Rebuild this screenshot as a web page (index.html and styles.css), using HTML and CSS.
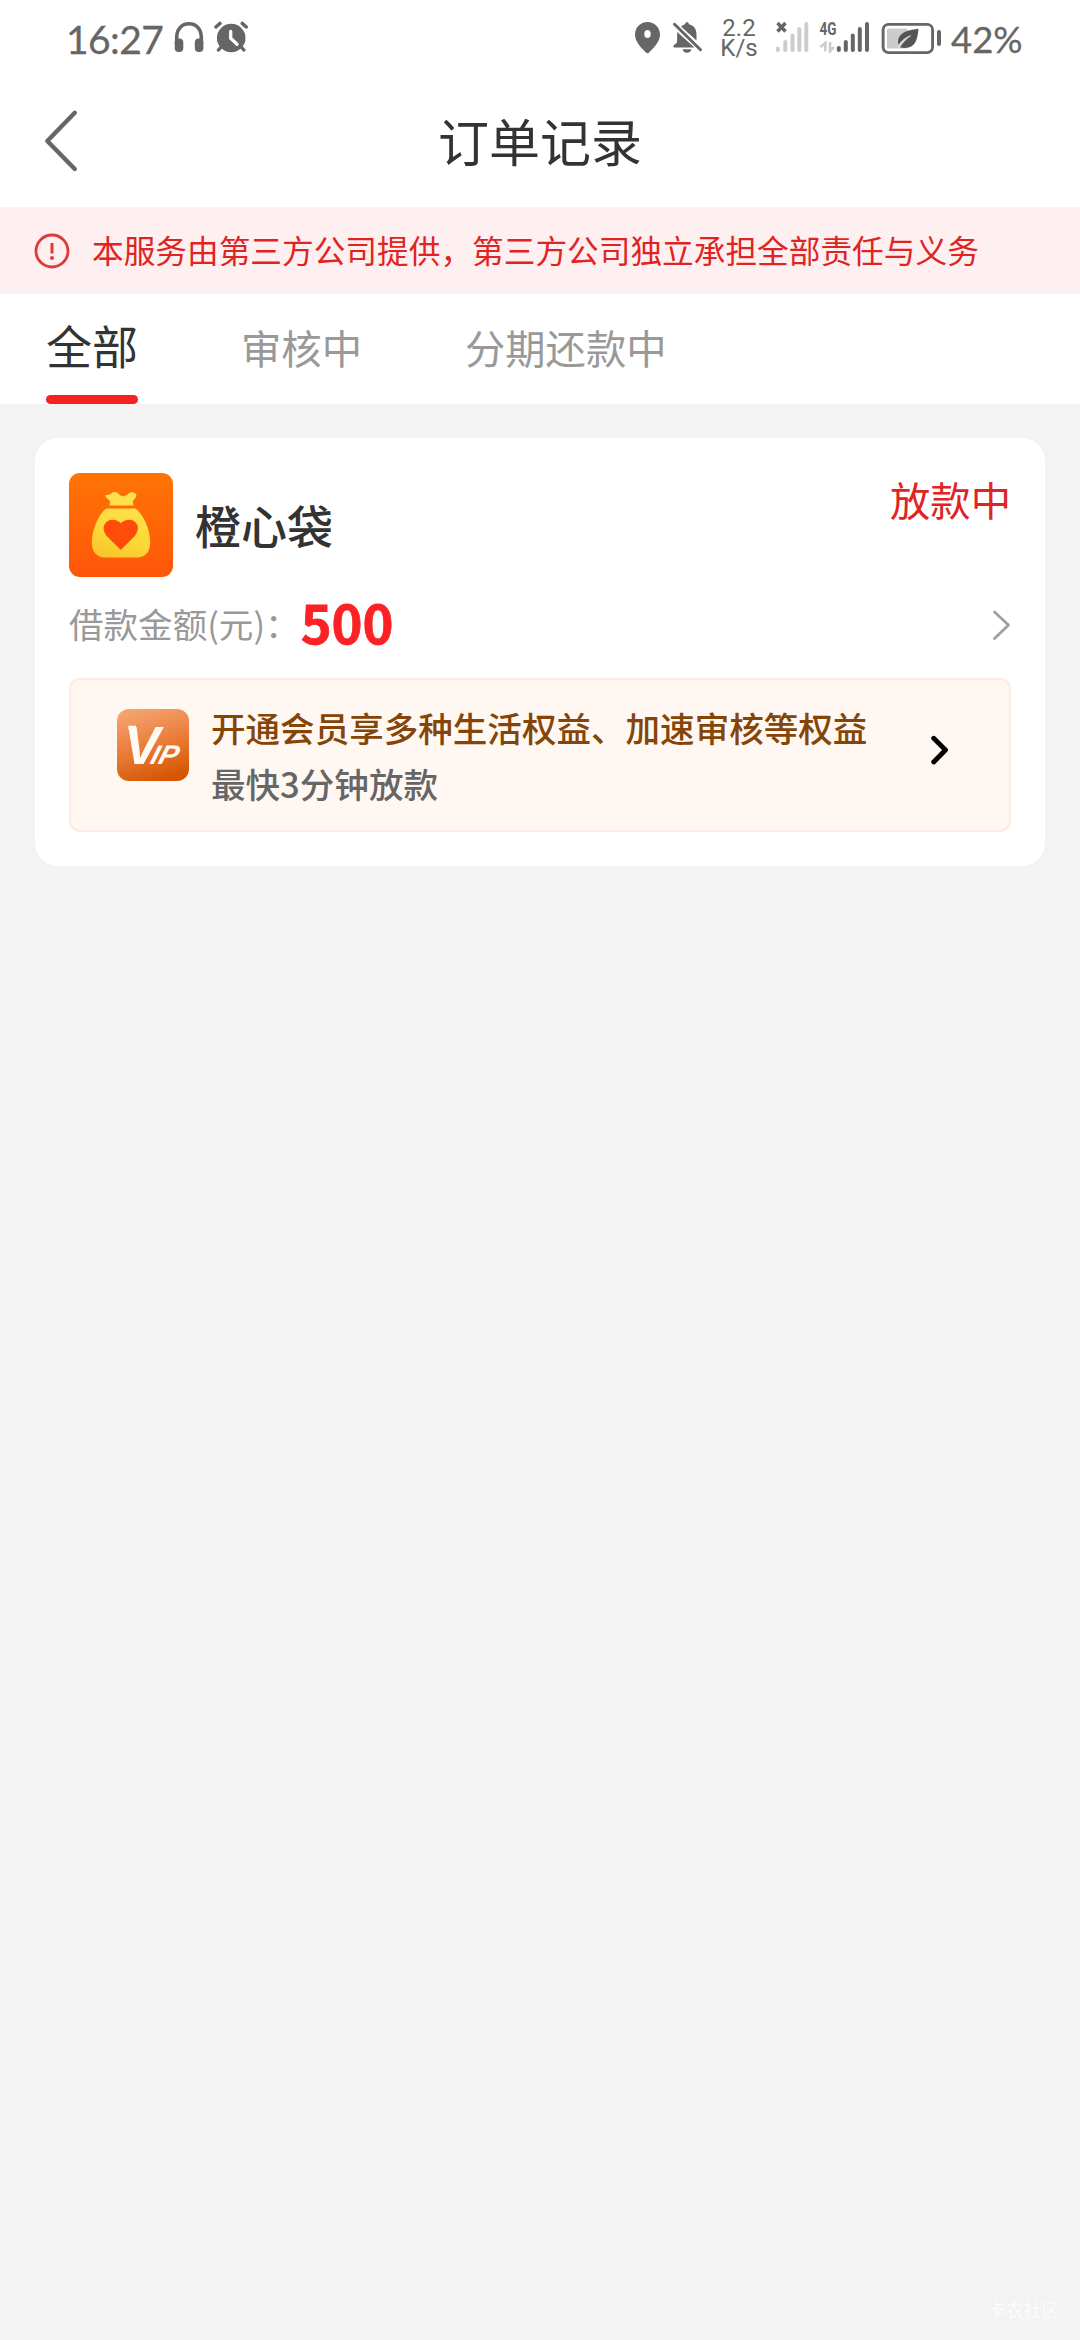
FILE: index.html
```html
<!DOCTYPE html>
<html lang="zh-CN">
<head>
<meta charset="utf-8">
<title>订单记录</title>
<link rel="stylesheet" href="styles.css">
</head>
<body>
<div class="status">
  <span class="time">16:27</span>
  <svg class="headphones" width="30" height="60" viewBox="174 10 30 60">
    <path d="M176.700 44V37.500C176.700 29.500 181.500 23.800 189 23.800S201.300 29.500 201.300 37.500V44" fill="none" stroke="#666" stroke-width="3.600"/>
    <rect x="174.700" y="38.500" width="8.600" height="13.500" rx="4" fill="#666"/>
    <rect x="194.800" y="38.500" width="8.600" height="13.500" rx="4" fill="#666"/>
  </svg>
  <svg class="alarm" width="35" height="60" viewBox="214 10 35 60">
    <circle cx="231.200" cy="38" r="14.300" fill="#666"/>
    <path d="M215.900 27L220 23.400M246.300 27L242.200 23.400M222 46L218.500 50M240.300 46L243.800 50" stroke="#666" stroke-width="3.400" stroke-linecap="round"/>
    <path d="M230.700 31.500V38.300L237 44.300" fill="none" stroke="#fff" stroke-width="3.300" stroke-linecap="round"/>
  </svg>
  <svg class="pin" width="26" height="60" viewBox="635 10 26 60">
    <path fill-rule="evenodd" d="M647.500 22C640.300 22 635 27.600 635 34.600C635 42 641 47.500 645.600 52.300Q647.500 54.300 649.400 52.300C654 47.500 660 42 660 34.600C660 27.600 654.700 22 647.500 22ZM647.500 30A3.200 4 0 0 1 647.500 38A3.200 4 0 0 1 647.500 30Z" fill="#666"/>
  </svg>
  <svg class="bell" width="31" height="60" viewBox="672 10 31 60">
    <path d="M681 26.500Q683.500 24.700 685 24.300Q685.500 22 687 22T689 24.300C694.500 25.800 696.500 29.500 696.500 34.500V40.500ZM677.200 32L694.500 47.600H673.500V45.500L677 42.500Z" fill="#666"/>
    <path d="M682.600 49.300H691.400Q690.500 52.800 687 52.800T682.600 49.300Z" fill="#666"/>
    <path d="M674.500 24.300L700.500 49.800" stroke="#666" stroke-width="3" stroke-linecap="round"/>
  </svg>
  <span class="speed"><span>2.2</span><span>K/s</span></span>
  <svg class="signal-none" width="34" height="60" viewBox="775 10 34 60">
    <path d="M777.500 23L785.500 31.500M785.500 23L777.500 31.500" stroke="#666" stroke-width="3.400"/>
    <path d="M777.900 48.500V49.900M785.300 42V49.900M792.500 35.500V49.900M799.300 29V49.900M806.300 24V49.900" stroke="#ccc" stroke-width="4" stroke-linecap="round"/>
  </svg>
  <svg class="signal-4g" width="52" height="60" viewBox="818 10 52 60">
    <text class="net" x="819.500" y="34.700" textLength="17" lengthAdjust="spacingAndGlyphs">4G</text>
    <path d="M825.300 51.500V43L820.500 47M830 42V51L834 47" fill="none" stroke="#ccc" stroke-width="2.600"/>
    <path d="M838.800 48V49.900M845.800 42V49.900M852.800 35.500V49.900M859.800 29V49.900M867 24V49.900" stroke="#666" stroke-width="4" stroke-linecap="round"/>
  </svg>
  <svg class="battery" width="60" height="60" viewBox="881 10 60 60">
    <rect x="883.100" y="24.400" width="49.500" height="28.200" rx="5.500" fill="none" stroke="#666" stroke-width="2.900"/>
    <rect x="887" y="28.500" width="20.500" height="20" rx="1.500" fill="#ccc"/>
    <path d="M918.500 28.800C910 30.200 899 31 898 41.500C898.300 44 898.500 45 900 47.500C916 50.500 917.500 39 918.500 28.800Z" fill="#555"/>
    <path d="M897.800 46.500C901 41 905 37.500 911 35.500C906 39 902 43 899 48.500" fill="#ddd" stroke="#ddd" stroke-width=".6"/>
    <path d="M939 32V44" stroke="#666" stroke-width="4" stroke-linecap="round"/>
  </svg>
  <span class="percent">42%</span>
</div>
<header class="header">
  <svg class="back" width="36" height="64" viewBox="43 109 36 64"><path d="M74.800 112.800L47.300 141L74.800 169" fill="none" stroke="#666" stroke-width="4.400" stroke-linecap="round" stroke-linejoin="round"/></svg>
  <h1 class="title">订单记录</h1>
</header>
<div class="notice">
  <svg class="alert" width="36" height="36" viewBox="0 0 36 36">
    <circle cx="18" cy="18" r="16" fill="none" stroke="#e03a3a" stroke-width="2.800"/>
    <path d="M18 10V20.500" stroke="#e03a3a" stroke-width="3"/>
    <circle cx="18" cy="25" r="2" fill="#e03a3a"/>
  </svg>
  <span class="notice-text">本服务由第三方公司提供，第三方公司独立承担全部责任与义务</span>
</div>
<nav class="tabs">
  <span class="tab active">全部</span>
  <span class="tab">审核中</span>
  <span class="tab">分期还款中</span>
</nav>
<main class="content">
  <section class="card">
    <div class="card-head">
      <svg class="logo" width="104" height="104" viewBox="0 0 104 104">
        <defs>
          <linearGradient id="bg" x1="0" y1="0" x2="0" y2="1"><stop offset="0" stop-color="#ff7404"/><stop offset="1" stop-color="#ff560a"/></linearGradient>
          <linearGradient id="bag" x1="0.700" y1="0" x2="0.300" y2="1"><stop offset="0" stop-color="#ffdf4c"/><stop offset=".6" stop-color="#fdd735"/><stop offset="1" stop-color="#f9c52c"/></linearGradient>
        </defs>
        <rect width="104" height="104" rx="11" fill="url(#bg)"/>
        <path d="M40.500 32.500L41 28Q37 25 36 22.500Q38.500 21.500 41 21.500Q44 18 48 19.500Q51 23 54 23.500Q58 22.500 61 19.500Q66 18.500 67.500 22Q67 25.500 63.800 28L64.500 32.500Z" fill="#ffdf4c"/>
        <path d="M37 35.500H66.500C74 41.500 81 55 81.200 69.500C81.200 79 76 84.500 68 84.500H36C28 84.500 22.800 79 22.800 69.500C23 55 30 41.500 37 35.500Z" fill="url(#bag)"/>
        <path d="M51.800 77L37.500 62.700C31 54 37 46.800 43.500 46.800Q48.500 46.800 51.800 50.300Q55.100 46.800 60 46.800C67 46.800 72.500 54 66 62.700Z" fill="#ff4c08"/>
      </svg>
      <h2 class="name">橙心袋</h2>
      <span class="state">放款中</span>
    </div>
    <div class="amount-row">
      <span class="label">借款金额(元)：</span>
      <strong class="amount">500</strong>
      <svg class="more" width="20" height="32" viewBox="0 0 20 32"><path d="M3.500 3L17.500 16L3.500 29.500" fill="none" stroke="#a0a0a0" stroke-width="2.800" stroke-linecap="round" stroke-linejoin="round"/></svg>
    </div>
    <div class="vip">
      <svg class="vip-icon" width="72" height="72" viewBox="0 0 72 72">
        <defs><linearGradient id="vipbg" x1="0.350" y1="0" x2="0.650" y2="1"><stop offset="0" stop-color="#f5a26e"/><stop offset=".55" stop-color="#e87833"/><stop offset="1" stop-color="#d45400"/></linearGradient></defs>
        <rect width="72" height="72" rx="12" fill="url(#vipbg)"/>
        <path d="M11.500 18.500H19" stroke="#fffaf2" stroke-width="3.600"/>
        <text class="vip-v" x="7" y="55">V</text>
        <text class="vip-ip" transform="translate(32 55) skewX(-16)" x="0" y="0" textLength="27" lengthAdjust="spacingAndGlyphs">IP</text>
      </svg>
      <div class="vip-copy">
        <div class="vip-title">开通会员享多种生活权益、加速审核等权益</div>
        <div class="vip-sub">最快3分钟放款</div>
      </div>
      <svg class="vip-more" width="20" height="32" viewBox="0 0 20 32"><path d="M3.700 4.300L15.500 16L3.700 28" fill="none" stroke="#000" stroke-width="4.800" stroke-linecap="round" stroke-linejoin="round"/></svg>
    </div>
  </section>
</main>
<div class="watermark">卡农社区</div>
</body>
</html>
```

FILE: styles.css
```css
* { box-sizing: border-box; }
body {
  margin: 0;
  width: 1080px;
  height: 2340px;
  overflow: hidden;
  background: #f3f3f3;
  color: #333;
  font-family: "Noto Sans CJK SC", sans-serif;
  display: flex;
  flex-direction: column;
}
svg { display: block; flex: none; }
h1, h2 { margin: 0; }

.status {
  height: 80px;
  background: #fff;
  color: #666;
  display: flex;
  align-items: flex-start;
  padding-top: 10px;
  font-family: Lato, sans-serif;
  white-space: nowrap;
}
.time { width: 108px; margin-left: 66px; font-size: 39px; line-height: 58px; letter-spacing: -.6px; -webkit-text-stroke: .3px #666; }
.alarm { margin-left: 10px; }
.pin { margin-left: 386px; }
.bell { margin-left: 11px; }
.speed {
  width: 36px;
  margin: 8px 0 0 18px;
  display: flex;
  flex-direction: column;
  align-items: center;
  font: 24px/20px Roboto, sans-serif;
}
.signal-none { margin-left: 18px; }
.signal-4g { margin-left: 9px; }
.net { font: 700 19px Roboto, sans-serif; fill: #666; }
.battery { margin-left: 11px; }
.percent { margin-left: 10px; font-size: 36.500px; line-height: 59px; -webkit-text-stroke: .3px #666; }

.header {
  height: 127px;
  background: #fff;
  display: grid;
  grid-template-columns: 36px 1fr 36px;
  align-items: center;
  padding: 0 43px;
}
.back { margin-top: -5px; }
.title { font-size: 51px; font-weight: 400; line-height: 70px; text-align: center; margin-top: -8px; }

.notice {
  height: 87px;
  background: #fef0f0;
  color: #e02424;
  display: flex;
  align-items: center;
  padding-left: 34px;
}
.notice-text { margin: -3px 0 0 22px; font-size: 31.680px; line-height: 50px; white-space: nowrap; }

.tabs {
  height: 110px;
  background: #fff;
  display: flex;
  gap: 103px;
  padding-left: 46px;
}
.tab { font-size: 40.320px; line-height: 105px; color: #999; }
.active { font-size: 46px; line-height: 101px; color: #333; display: flex; flex-direction: column; }
.active::after { content: ""; height: 9px; border-radius: 4.500px; background: #f42222; flex: none; }

.content { padding: 34px 35px 0; }
.card { height: 428px; background: #fff; border-radius: 23px; padding: 35px 34px 34px; display: flex; flex-direction: column; }
.card-head { display: flex; align-items: center; height: 104px; }
.name { margin: -3px 0 0 22px; font-size: 46px; font-weight: 500; line-height: 60px; }
.state { margin-left: auto; align-self: flex-start; font-size: 40.320px; line-height: 52px; color: #e02424; }
.amount-row { height: 101px; display: flex; align-items: center; padding-bottom: 6px; }
.label { margin-top: -4px; font-size: 34.560px; color: #999; line-height: 50px; }
.amount { margin: -7px 0 0 1px; font-size: 52.500px; line-height: 60px; color: #fb2226; -webkit-text-stroke: .8px #fb2226; }
.more { margin-left: auto; }
.vip {
  height: 154px;
  border: 2px solid #fdebe1;
  border-radius: 11px;
  background: #fff7f1;
  display: flex;
  align-items: flex-start;
  padding: 29px 59px 0 46px;
}
.vip-v { font: italic 700 54px "Liberation Sans", sans-serif; fill: #fffaf2; }
.vip-ip { font: italic 700 27px "Liberation Sans", sans-serif; fill: #fffaf2; }
.vip-copy { margin: -10px 0 0 22px; font-size: 34.560px; font-weight: 500; line-height: 56px; white-space: nowrap; }
.vip-title { color: #854507; }
.vip-sub { color: #666; }
.vip-more { margin: 25px 0 0 auto; }

.watermark { position: absolute; right: 21px; bottom: 19px; font-size: 17.800px; line-height: 24px; color: #fcfcfc; }
```
